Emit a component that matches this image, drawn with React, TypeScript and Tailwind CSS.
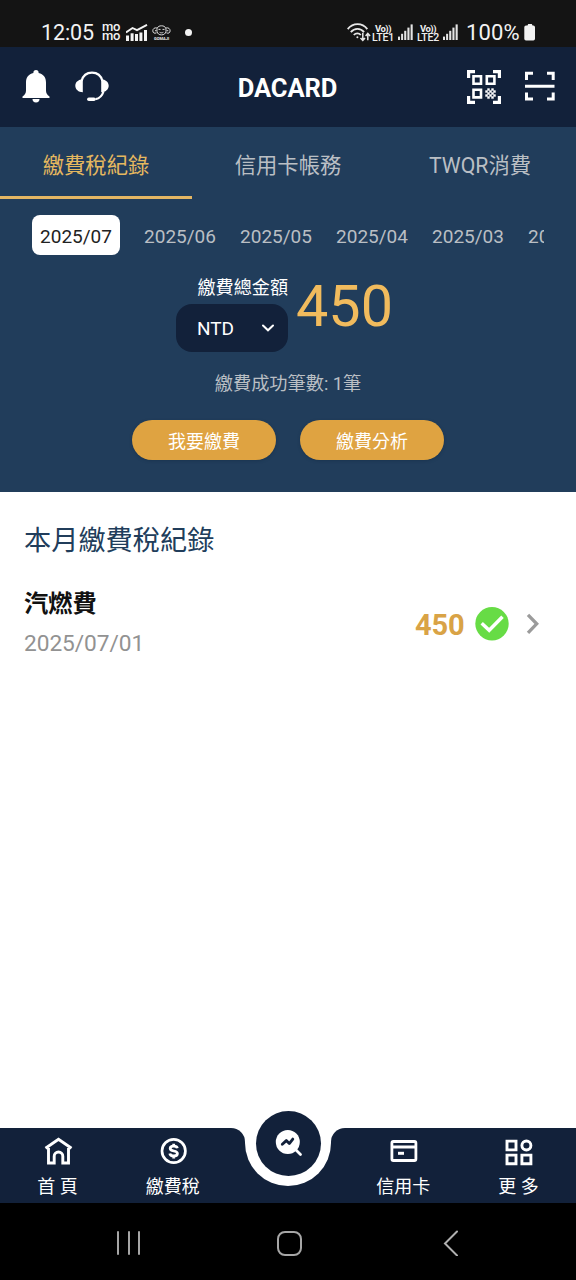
import React from "react";

const months = ["2025/07", "2025/06", "2025/05", "2025/04", "2025/03", "2025/02"];

function Signal() {
  return (
    <svg className="h-4 w-[15px] shrink-0" viewBox="0 0 15 16" fill="#e4e4e4">
      <rect x="0" y="12.6" width="2" height="3.4" />
      <rect x="3.1" y="9.8" width="2" height="6.2" />
      <rect x="6.2" y="6.8" width="2.1" height="9.2" />
      <rect x="9.4" y="3.6" width="2.1" height="12.4" />
      <rect x="12.6" y="0.4" width="2.1" height="15.6" />
    </svg>
  );
}

function VoLte({ line }: { line: string }) {
  return (
    <div className="flex w-[22px] shrink-0 flex-col items-center whitespace-nowrap text-[10.5px] font-medium leading-[9px] text-[#eeeeee]">
      <span className="text-[9.5px] font-bold tracking-[-0.5px]">Vo))</span>
      <span className="tracking-[-0.2px]">{line}</span>
    </div>
  );
}

function StatusBar() {
  return (
    <div className="flex h-[47px] items-start bg-[#141414] pl-[41px] text-[#f2f2f2]">
      <div className="mt-[21px] w-[61px] whitespace-nowrap text-[21.5px] leading-6 tracking-[-0.1px]">12:05</div>
      <div className="mt-[22px] w-[20px] text-[13px] font-medium leading-[9px] tracking-[-0.2px]">
        <div>mo</div>
        <div>mo</div>
      </div>
      <svg className="ml-[4px] mt-[24px] h-[17px] w-[22px]" viewBox="0 0 22 17" fill="#f2f2f2">
        <rect x="0" y="11.5" width="3" height="5.5" />
        <rect x="4.6" y="9.3" width="3" height="7.7" />
        <rect x="9" y="10" width="3" height="7" />
        <rect x="13.4" y="8.5" width="3" height="8.5" />
        <rect x="18" y="6" width="3" height="11" />
        <path d="M0 8.5 6.5 4 11 6.2 21 0.8" fill="none" stroke="#f2f2f2" strokeWidth="1.9" />
      </svg>
      <div className="ml-[4px] mt-[25px] flex w-[19px] flex-col items-center">
        <svg className="h-[11px] w-[19px]" viewBox="0 0 19 11" fill="none" stroke="#dcdcdc" strokeWidth="1">
          <path d="M5.2 3.2C6 1.4 7.5.8 9.5.8s3.6.7 4.2 2.4c.8 2.5.2 4.7-1.2 5.8-1.5 1.2-4.5 1.2-6 0C5.1 7.9 4.5 5.5 5.2 3.2Z" />
          <path d="M5 3C2.5 2.3.8 3.800.8 5.800s1.600 3.100 3.700 2M14 3c2.500-.7 4.100.8 4.100 2.800s-1.600 3.100-3.700 2M3 5.700h1.500M14.600 5.700h1.700M6.500 4.400h2M10.500 4.400h2M7.600 7.300c1 .7 2.800.7 3.800 0" />
        </svg>
        <span className="mt-px text-[4px] font-bold leading-[4px]">GOMAJI</span>
      </div>
      <div className="ml-[14px] mt-[29px] size-[7px] rounded-full bg-[#f2f2f2]" />
      <svg className="ml-[155px] mt-[23px] h-[19px] w-[24px]" viewBox="0 0 24 19" fill="none" stroke="#e6e6e6" strokeWidth="1.8">
        <path d="M.7 6.100C6-.5 15.200-.5 20.300 6.100M3.800 9.100c3.600-4.400 9.700-4.400 13.300 0M6.800 12c2-2.300 5.100-2.300 7 0" />
        <circle cx="10.4" cy="14.2" r="1" fill="#e6e6e6" stroke="none" />
        <path d="M15.800 9.800v7.500M13.500 15l2.300 2.500 2.200-2.500M20.800 17.200v-6.500M18.600 12.900l2.200-2.500 2.300 2.500" strokeWidth="1.5" />
      </svg>
      <div className="ml-[1px] mt-[24px]"><VoLte line="LTE1" /></div>
      <div className="ml-[4px] mt-[24px]"><Signal /></div>
      <div className="ml-[4px] mt-[24px]"><VoLte line="LTE2" /></div>
      <div className="ml-[4px] mt-[24px]"><Signal /></div>
      <div className="ml-[8px] mt-[21px] w-[57px] whitespace-nowrap text-[22px] leading-6 tracking-[0.1px]">100%</div>
      <svg className="ml-[1px] mt-[24px] h-[17px] w-[12px]" viewBox="0 0 12 17" fill="#f2f2f2">
        <path d="M3.500 1.500 4.200 0h3.600l.7 1.500h.8A1.700 1.700 0 0 1 11 3.200v11.600a1.700 1.700 0 0 1-1.700 1.700H2A1.700 1.700 0 0 1 .3 14.800V3.200A1.700 1.700 0 0 1 2 1.500Z" />
      </svg>
    </div>
  );
}

function Header() {
  return (
    <header className="flex h-20 items-start bg-[#12213a] pl-[22px] text-white">
      <svg className="mt-[22px] h-[34px] w-[28px]" viewBox="0 0 28 34" fill="white">
        <path d="M14 1a2.600 2.600 0 0 1 2.600 2.600v.5C21.500 5.200 24 8.600 24 13.500v8c0 2.500 1 4.300 3.500 6v1.500H.5v-1.500C3 25.800 4 24 4 21.500v-8c0-4.900 2.500-8.300 7.400-9.400v-.5A2.600 2.600 0 0 1 14 1Z" />
        <path d="M10.500 30h7a3.500 3.500 0 0 1-7 0Z" />
      </svg>
      <svg className="ml-[25px] mt-[24px] h-[32px] w-[34px]" viewBox="0 0 34 32" fill="none" stroke="white" strokeWidth="2.2">
        <path d="M6.500 10C8 4.500 12 1.600 17 1.600S26 4.500 27.500 10M28.500 20.500c-1.500 4.800-4.200 7-8 7.700" />
        <path d="M7.800 8.300v13C3.500 21.200.3 18.500.3 14.800S3.500 8.500 7.800 8.300ZM26.200 8.300v13c4.300-.1 7.500-2.800 7.500-6.500S30.500 8.500 26.200 8.300Z" fill="white" stroke="none" />
        <path d="M13.800 28.200H19" strokeWidth="3.4" strokeLinecap="round" />
      </svg>
      <h1 className="ml-[128px] mt-[25px] w-[102px] whitespace-nowrap pr-px text-center text-[25.5px] font-bold leading-8 tracking-[-0.1px]">DACARD</h1>
      <svg className="ml-[127px] mt-[22px] h-[36px] w-[36px]" viewBox="0 0 36 36" fill="none" stroke="white" strokeWidth="3.2">
        <path d="M2.600 9V2.600H9M27 2.600h6.400V9M33.400 27v6.400H27M9 33.400H2.600V27" />
        <path d="M7.500 7.200H15v7.600H7.500ZM20.800 7.200h7.600v7.600h-7.600ZM7.500 20.800H15v7.600H7.500Z" strokeWidth="2.6" />
        <path d="M21.500 19.600h2v2h-2ZM25.500 19.600h2v2h-2ZM19.500 21.600h2v2h-2ZM23.500 21.600h2v2h-2ZM27.500 21.600h2v2h-2ZM21.500 23.600h2v2h-2ZM25.500 23.600h2v2h-2ZM19.500 25.600h2v2h-2ZM23.500 25.600h2v2h-2ZM27.500 25.600h2v2h-2ZM21.500 27.600h2v2h-2ZM25.500 27.600h2v2h-2Z" fill="white" strokeWidth="0.4" />
      </svg>
      <svg className="ml-[22px] mt-[24px] h-[32px] w-[32px]" viewBox="0 0 32 32" fill="none" stroke="white" strokeWidth="3">
        <path d="M2.500 9V2.300H9M23 2.300h6.200V9M29.200 21.500v6.500H23M9 28H2.500v-6.500M1 15.200h29.500" />
      </svg>
    </header>
  );
}

function Summary() {
  return (
    <section className="h-[365px] bg-[#213d5b] text-[#babfc4]">
      <nav className="grid h-[72px] grid-cols-3 grid-rows-[72px] text-center text-[21.3px] leading-[77px]">
        <div className="h-[72px] border-b-[3px] border-[#e4b663] text-[#e5b85f]">繳費稅紀錄</div>
        <div>信用卡帳務</div>
        <div>TWQR消費</div>
      </nav>
      <div className="mx-8 mt-4 flex h-10 gap-2 overflow-hidden text-[19px] leading-[44px]">
        {months.map((month, index) => (
          <div
            key={month}
            className={index === 0 ? "mr-2 w-[88px] shrink-0 rounded-lg bg-white text-center text-[#222222]" : "w-[88px] shrink-0 text-center"}
          >
            {month}
          </div>
        ))}
      </div>
      <div className="flex h-[97px] pl-[176px] pt-[17px]">
        <div className="w-[112px] text-white">
          <div className="h-8 whitespace-nowrap text-right text-[18.1px] leading-[32px]">繳費總金額</div>
          <div className="flex h-12 items-center justify-between rounded-2xl bg-[#12213a] pl-[21px] pr-[14px] text-[19px]">
            <span className="mt-[3px]">NTD</span>
            <svg className="h-[8px] w-[12px]" viewBox="0 0 12 8" fill="none" stroke="white" strokeWidth="2" strokeLinecap="round">
              <path d="m1 1.500 5 4.800 5-4.800" />
            </svg>
          </div>
        </div>
        <div className="ml-[8px] text-[57.5px] leading-[69px] text-[#f1bb5d]">450</div>
      </div>
      <div className="mt-[19px] text-center text-[18.2px] leading-[26px]">繳費成功筆數: 1筆</div>
      <div className="mt-[23px] flex justify-center gap-6 text-[18px] leading-[44px] text-white">
        <button className="h-10 w-36 rounded-full bg-[#dfa341] shadow-[0_1px_3px_#142b4580]">我要繳費</button>
        <button className="h-10 w-36 rounded-full bg-[#dfa341] shadow-[0_1px_3px_#142b4580]">繳費分析</button>
      </div>
    </section>
  );
}

function NavItem({ label, children }: { label: string; children: React.ReactNode }) {
  return (
    <div className="flex w-[115.2px] flex-col items-center pt-2">
      <svg className="size-[30px]" viewBox="0 0 30 30" fill="none" stroke="white" strokeWidth="3">
        {children}
      </svg>
      <span className="mt-[8px] whitespace-pre text-[18px] leading-[26px]">{label}</span>
    </div>
  );
}

function BottomNav() {
  return (
    <nav className="relative flex h-[75px] text-white">
      <div className="flex w-[245px] rounded-tr-[14px] bg-[#12213a]">
        <NavItem label="首 頁">
          <path d="M5.500 12v15h5.700v-6.700a4.300 4.300 0 0 1 8.600 0v6.700h5.700V12" strokeWidth="2.9" />
          <path d="m2.500 12.200 13-9 13 9" strokeWidth="2.9" />
        </NavItem>
        <NavItem label="繳費稅">
          <circle cx="15.700" cy="15" r="11.700" strokeWidth="2.7" />
          <path d="M19.300 12.200c-.3-1.500-1.600-2-3.600-2s-3.500.8-3.500 2.300c0 3.500 7.200 1.500 7.200 5 0 1.600-1.500 2.500-3.700 2.500s-3.600-.9-3.900-2.500M15.700 7.800v2.500M15.700 20v2.500" strokeWidth="2.8" />
        </NavItem>
      </div>
      <div className="w-[86px] bg-[#12213a]">
        <div className="h-[58px] rounded-b-[43px] bg-white" />
      </div>
      <div className="flex w-[245px] justify-end rounded-tl-[14px] bg-[#12213a]">
        <NavItem label="信用卡">
          <rect x="3.900" y="5.500" width="24" height="19" rx="1.5" strokeWidth="2.8" />
          <path d="M4 11h24" />
          <path d="M10 17.300h6" strokeWidth="3" />
        </NavItem>
        <NavItem label="更 多">
          <path d="M4 5.100h9v8.800H4ZM4 19.100h9v8.600H4ZM18.900 19.100h9v8.600h-9Z" strokeWidth="2.9" />
          <circle cx="23.400" cy="9.500" r="4.500" strokeWidth="2.9" />
        </NavItem>
      </div>
      <div className="absolute -top-[17px] left-[256px] size-[65px] rounded-full bg-[#12213a]">
        <svg className="size-full" viewBox="0 0 65 65" fill="none">
          <circle cx="31.800" cy="31" r="12" fill="white" />
          <path d="m40 39 4.500 4.500" stroke="white" strokeWidth="2.8" strokeLinecap="round" />
          <path d="m26.300 33.300 4-3.700 3 3 3.500-4.500" stroke="#12213a" strokeWidth="2.8" strokeLinecap="round" strokeLinejoin="round" />
        </svg>
      </div>
    </nav>
  );
}

export default function App() {
  return (
    <div className="flex h-[1280px] w-[576px] flex-col overflow-hidden bg-white [font-family:Roboto,'Noto_Sans_CJK_TC',sans-serif]">
      <StatusBar />
      <Header />
      <Summary />
      <main className="flex-1 pl-6 pt-[28px]">
        <h2 className="h-[42px] text-[27.2px] leading-[43px] text-[#213d5b]">本月繳費稅紀錄</h2>
        <div className="mt-[23px] flex">
          <div className="w-[391px]">
            <div className="h-[38px] text-[24.3px] font-bold leading-[38px] text-[#111111]">汽燃費</div>
            <div className="mt-[4px] text-[22.7px] leading-[33px] tracking-[-0.05px] text-[#929292]">2025/07/01</div>
          </div>
          <div className="mt-[17px] flex h-[44px] items-center">
            <span className="mt-[3px] w-[60px] text-[29px] font-bold tracking-[-0.2px] text-[#d9a346]">450</span>
            <svg className="size-[34px]" viewBox="0 0 34 34" fill="none">
              <circle cx="17" cy="16.700" r="16.700" fill="#67dc45" />
              <path d="m6.700 16.200 7.500 7L27.500 9.700" stroke="white" strokeWidth="3.5" />
            </svg>
            <svg className="ml-[17px] h-[22px] w-[14px]" viewBox="0 0 14 22" fill="none" stroke="#9b9b9b" strokeWidth="3.3">
              <path d="m2 1.800 8.700 9-8.700 9" />
            </svg>
          </div>
        </div>
      </main>
      <BottomNav />
      <footer className="flex h-[77px] items-start bg-black pl-[117px] pt-[28px]">
        <div className="flex gap-[8.500px]">
          <i className="h-[24px] w-[2px] rounded bg-[#a6a6a6]" />
          <i className="h-[24px] w-[2px] rounded bg-[#a6a6a6]" />
          <i className="h-[24px] w-[2px] rounded bg-[#a6a6a6]" />
        </div>
        <div className="ml-[137px] size-[25px] rounded-[8px] border-2 border-[#a6a6a6]" />
        <svg className="-mt-px ml-[141px] h-[26px] w-[16px]" viewBox="0 0 16 26" fill="none" stroke="#b0b0b0" strokeWidth="2" strokeLinecap="round">
          <path d="M14 1.500 2 13.500l12 12" />
        </svg>
      </footer>
    </div>
  );
}
